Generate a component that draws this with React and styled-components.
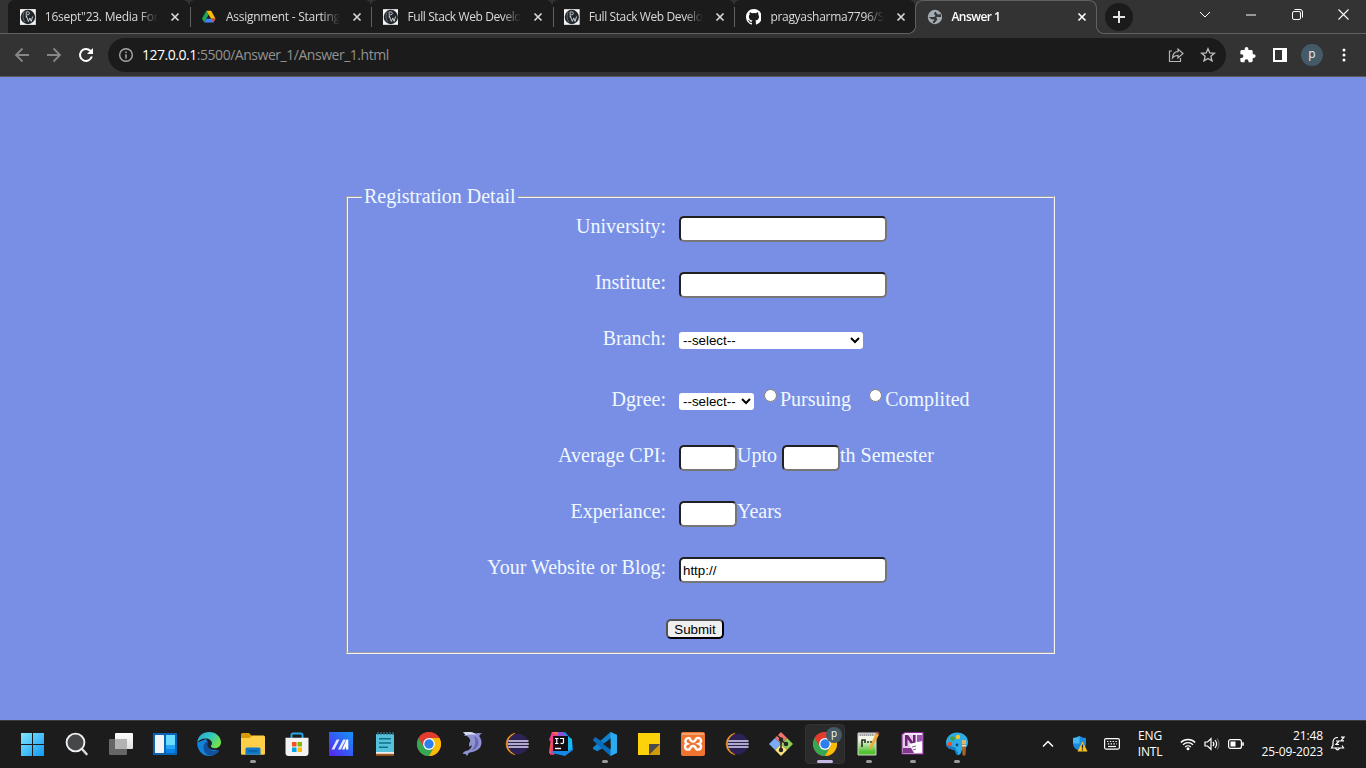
import React from "react";
import styled, { createGlobalStyle, css } from "styled-components";

const GlobalStyle = createGlobalStyle`
  * { box-sizing: border-box; }
  body { margin: 0; overflow: hidden; background: #788fe5; }
`;

const Screen = styled.div`
  width: 1366px;
  height: 768px;
  display: flex;
  flex-direction: column;
  font-family: "Open Sans", "Noto Sans", sans-serif;
  overflow: hidden;
`;

/* ---------- browser chrome ---------- */

const TabStrip = styled.div`
  height: 34px;
  flex: none;
  display: flex;
  padding-left: 8px;
  background: #333333;
  border-bottom: 1px solid #606060;
`;

const TabBox = styled.div`
  position: relative;
  flex: none;
  width: 181.4px;
  height: 33px;
  display: flex;
  align-items: center;
  padding: 0 8px 0 12px;
  border-radius: 6px 6px 0 0;
  background: #1b1b1b;
  color: #dadada;

  ${(p) =>
    p.$divided &&
    css`
      &::after {
        content: "";
        position: absolute;
        right: -1.6px;
        top: 7px;
        width: 1px;
        height: 20px;
        background: #606060;
        z-index: 1;
      }
    `}

  ${(p) =>
    p.$active &&
    css`
      height: 34px;
      margin-left: -0.4px;
      width: 182px;
      padding-left: 11px;
      padding-bottom: 1px;
      background: #333333;
      color: #ffffff;
      border: solid #606060;
      border-width: 1px 1px 0;
      border-radius: 8px 8px 0 0;
      z-index: 2;
      &::before,
      &::after {
        content: "";
        position: absolute;
        bottom: 0;
        width: 8px;
        height: 8px;
      }
      &::before {
        left: -8px;
        background: radial-gradient(circle at 0 0, #1b1b1b 6.7px, #606060 7.2px, #606060 7.7px, #333333 8.2px);
      }
      &::after {
        right: -8px;
        background: radial-gradient(circle at 100% 0, #333333 6.7px, #606060 7.2px, #606060 7.7px, #333333 8.2px);
      }
    `}
`;

const TabTitle = styled.div`
  width: 114px;
  margin-left: 9px;
  font-size: 12px;
  line-height: 16px;
  font-weight: ${(p) => (p.$active ? 600 : 500)};
  letter-spacing: ${(p) => p.$spacing};
  white-space: nowrap;
  mask-image: linear-gradient(90deg, #000 84%, transparent 100%);
`;

const CloseMark = styled.svg`
  flex: none;
  margin-left: 11px;
`;

const NewTab = styled.div`
  width: 28px;
  height: 28px;
  margin: 3px 0 0 8px;
  border-radius: 50%;
  background: #1b1b1b;
  display: flex;
  align-items: center;
  justify-content: center;
`;

const WindowControls = styled.div`
  margin-left: auto;
  height: 29px;
  display: flex;
`;

const WindowControl = styled.div`
  width: 46px;
  display: flex;
  align-items: center;
  justify-content: center;
`;

const Toolbar = styled.div`
  height: 43px;
  flex: none;
  display: flex;
  align-items: center;
  padding: 0 6px;
  background: #333333;
  border-bottom: 1px solid #5a5a5a;
`;

const ToolCell = styled.div`
  width: 32px;
  height: 32px;
  display: flex;
  align-items: center;
  justify-content: center;
`;

const AddressBar = styled.div`
  flex: 1;
  height: 34px;
  margin: 0 6px;
  border-radius: 17px;
  background: #1b1b1b;
  display: flex;
  align-items: center;
  padding: 0 2px 0 11px;
`;

const Url = styled.div`
  flex: 1;
  margin-left: 9px;
  font-size: 14px;
  line-height: 18px;
  letter-spacing: -0.47px;
  color: #929292;
  b { font-weight: 400; color: #ffffff; }
`;

const Avatar = styled.div`
  width: 22px;
  height: 22px;
  border-radius: 50%;
  background: #455a67;
  color: #e8eef2;
  font-size: 12px;
  line-height: 19px;
  text-align: center;
`;

/* ---------- page ---------- */

const Page = styled.main`
  height: 643px;
  flex: none;
  padding: 109px 0 0 346px;
  background: #788fe5;
  color: aliceblue;
  font: 20px/20px "Liberation Serif", "Times New Roman", serif;
`;

const Fieldset = styled.fieldset`
  width: 709px;
  height: 468px;
  margin: 0;
  padding: 8px 0 0;
  border: 2px groove #f4f4f4;
`;

const Legend = styled.legend`
  margin-left: 14px;
  padding: 0 2px 2px;
`;

const Row = styled.div`
  height: ${(p) => p.$height || 56}px;
  display: grid;
  grid-template-columns: 318px 1fr;
  column-gap: 13px;
`;

const Label = styled.label`
  text-align: right;
`;

const Controls = styled.div`
  display: flex;
  align-items: flex-start;
  white-space: pre;
`;

const TextInput = styled.input`
  width: ${(p) => p.$width || 208}px;
  height: 26px;
  padding: 1px 2px;
  border: 2px inset #767676;
  border-radius: 5px;
  background: #ffffff;
  color: #000000;
  font: 13.33px "Liberation Sans", Arial, sans-serif;
`;

const Select = styled.select`
  width: ${(p) => p.$width}px;
  height: 17px;
  margin-top: 4px;
  padding: 0;
  border: 0;
  border-radius: 3px;
  background-color: #ffffff;
  color: #000000;
  font: 13.33px "Liberation Sans", Arial, sans-serif;
`;

const Radio = styled.input`
  width: 13px;
  height: 13px;
  margin: 0 3px 0 ${(p) => p.$before}px;
`;

const Text = styled.span`
  margin-left: ${(p) => p.$before || 0}px;
`;

const Submit = styled.button`
  display: block;
  width: 58px;
  height: 20px;
  margin: 6px 0 0 318px;
  padding: 0;
  border: 2px outset #000000;
  border-radius: 5px;
  background: #efefef;
  color: #000000;
  font: 13.33px/15px "Liberation Sans", Arial, sans-serif;
`;

/* ---------- taskbar ---------- */

const Taskbar = styled.footer`
  height: 48px;
  flex: none;
  display: flex;
  padding: 0 16px 0 11px;
  background: #1c1c1c;
  border-top: 1px solid #3b3b42;
  color: #ffffff;
`;

const AppSlot = styled.div`
  position: relative;
  width: 44px;
  height: 46px;
  display: flex;
  align-items: center;
  justify-content: center;

  ${(p) =>
    p.$active &&
    css`
      &::before {
        content: "";
        position: absolute;
        inset: 3px 2px;
        border-radius: 4px;
        background: #2b2b2b;
        border: 1px solid #333333;
      }
    `}

  ${(p) =>
    p.$running &&
    css`
      &::after {
        content: "";
        position: absolute;
        bottom: 4px;
        left: 50%;
        width: ${p.$active ? 16 : 6}px;
        height: 3px;
        transform: translateX(-50%);
        border-radius: 2px;
        background: ${p.$active ? "#c3b9e4" : "#9a9a9a"};
      }
    `}

  svg { position: relative; overflow: visible; }
`;

const ProfileBadge = styled.span`
  position: absolute;
  right: 5px;
  top: 6px;
  width: 16px;
  height: 16px;
  border-radius: 50%;
  background: #455a67;
  color: #ffffff;
  font-size: 10px;
  line-height: 13px;
  text-align: center;
`;

const Tray = styled.div`
  margin-left: auto;
  height: 46px;
  display: flex;
  align-items: center;
`;

const TrayCell = styled.div`
  width: ${(p) => p.$width || 24}px;
  display: flex;
  align-items: center;
  justify-content: center;
`;

const TrayText = styled.div`
  width: ${(p) => p.$width}px;
  margin-right: ${(p) => p.$after}px;
  font-size: 12px;
  line-height: 16px;
  font-weight: 500;
  text-align: ${(p) => p.$align};
  letter-spacing: ${(p) => p.$spacing};
  white-space: nowrap;
`;

/* ---------- icons ---------- */

const PwIcon = () => (
  <svg width="16" height="16" viewBox="0 0 16 16">
    <rect width="16" height="16" fill="#f5f5f5" />
    <circle cx="8" cy="8" r="7.3" fill="#20262b" />
    <path d="M6.300 8.500V2.800h1.800a1.400 1.400 0 0 1 0 2.900H6.500" fill="none" stroke="#c9cfd1" strokeWidth=".9" />
    <path d="m6.500 7 2 5.500 1.500-3.500 1.300 3.500 1.500-5" fill="none" stroke="#dfe3e4" strokeWidth=".9" />
    <path d="M4.500 2.800C2.500 5 2.500 10 5 13" fill="none" stroke="#7b858a" strokeWidth=".8" />
  </svg>
);

const DriveIcon = () => (
  <svg width="16" height="16" viewBox="0 0 16 16">
    <path d="M5.500 1.500 1 9.700l2.300 3.800L8 5.700z" fill="#1ea55b" />
    <path d="M5.500 1.500h5L15 9.700h-4.600z" fill="#fbbc05" />
    <path d="M5.600 9.700H15l-2.300 3.900H3.300z" fill="#4285f4" />
    <path d="M10.400 9.700H15l-2.300 3.900z" fill="#ea4335" />
  </svg>
);

const GithubIcon = () => (
  <svg width="16" height="16" viewBox="0 0 16 16">
    <path fill="#fff" d="M8 0C3.580 0 0 3.580 0 8c0 3.540 2.290 6.530 5.470 7.590.4.070.55-.17.55-.38 0-.19-.01-.82-.01-1.490-2.010.37-2.530-.49-2.690-.94-.09-.23-.48-.94-.82-1.130-.28-.15-.68-.52-.01-.53.630-.010 1.080.58 1.230.82.720 1.210 1.870.87 2.330.66.070-.52.280-.87.510-1.070-1.780-.2-3.640-.89-3.640-3.950 0-.87.310-1.590.82-2.150-.08-.2-.36-1.020.08-2.120 0 0 .67-.21 2.200.82a7.600 7.600 0 0 1 4 0c1.530-1.040 2.200-.82 2.200-.82.440 1.100.160 1.920.080 2.120.510.560.820 1.270.820 2.150 0 3.070-1.870 3.750-3.650 3.950.290.250.540.730.540 1.480 0 1.070-.01 1.930-.01 2.200 0 .210.150.460.550.380A8.010 8.010 0 0 0 16 8c0-4.420-3.580-8-8-8z" />
  </svg>
);

const GlobeIcon = () => (
  <svg width="16" height="16" viewBox="0 0 16 16">
    <circle cx="8" cy="8" r="7.200" fill="#a3abb3" />
    <path d="M8.200 2.500 7 5 8.500 6.200 7.500 8H4.500l-2.800.3L5 10.500l2-.3.5 1.500H6v2l1.200.6 2.300-2.500 1-1.800L9 8.800l1.800-1 2.200.4 1.400-.7-.8-2.700-1.800 1-1.300-.6z" fill="#353638" />
  </svg>
);

const Cross = ({ color }) => (
  <CloseMark width="12" height="12" viewBox="0 0 12 12">
    <path d="m2.500 2.500 7 7m0-7-7 7" stroke={color} strokeWidth="1.700" />
  </CloseMark>
);

const Chrome = () => (
  <svg width="24" height="24" viewBox="0 0 24 24">
    <circle cx="12" cy="12" r="12" fill="#ea4335" />
    <path d="M1.600 6A12 12 0 0 0 12 24l5.200-9L12 12H6.800z" fill="#34a853" />
    <path d="M22.400 6H12l5.200 9L12 24A12 12 0 0 0 22.400 6z" fill="#fbbc05" />
    <path d="M1.600 6a12 12 0 0 1 20.800 0H12a6 6 0 0 0-5.200 9z" fill="#e33b2e" />
    <circle cx="12" cy="12" r="5.900" fill="#fff" />
    <circle cx="12" cy="12" r="4.700" fill="#2d7ff0" />
  </svg>
);

const Eclipse = () => (
  <svg width="24" height="24" viewBox="0 0 24 24">
    <path d="M10 1.200a11 11 0 0 0 0 21.600A12.500 12.500 0 0 1 10 1.200z" fill="#f7941e" stroke="#f7941e" strokeWidth=".6" />
    <circle cx="13" cy="12" r="10.400" fill="#2c2255" />
    <path d="M3.300 9h20.200M2.800 12h21M3.300 15h20.200" stroke="#d9d8ed" strokeWidth="1.600" />
  </svg>
);

const appIcons = {
  start: (
    <svg width="24" height="24" viewBox="0 0 24 24">
      <defs>
        <linearGradient id="win" x1="0" y1="0" x2="1" y2="1">
          <stop offset="0" stopColor="#7fe9ff" />
          <stop offset="1" stopColor="#1299f5" />
        </linearGradient>
      </defs>
      <path fill="url(#win)" d="M0 1h11v11H0zM12 1h11v11H12zM0 13h11v11H0zM12 13h11v11H12z" />
    </svg>
  ),
  search: (
    <svg width="24" height="24" viewBox="0 0 24 24">
      <path d="m17 17 4.500 5" stroke="#d3d8dc" strokeWidth="2.600" strokeLinecap="round" />
      <circle cx="10.500" cy="10.500" r="8.900" fill="#454749" stroke="#eef0f1" strokeWidth="1.900" />
    </svg>
  ),
  taskView: (
    <svg width="24" height="24" viewBox="0 0 24 24">
      <defs>
        <linearGradient id="tv" x1="0" y1="0" x2="0" y2="1">
          <stop offset="0" stopColor="#fff" />
          <stop offset="1" stopColor="#dedede" />
        </linearGradient>
      </defs>
      <rect x="0" y="7" width="18" height="16" rx="1" fill="#666" />
      <rect x="6" y="1" width="18" height="16" rx="1" fill="url(#tv)" />
      <path d="M6 7h12v10H6z" fill="#b3b3b3" />
    </svg>
  ),
  widgets: (
    <svg width="24" height="24" viewBox="0 0 24 24">
      <rect y="1" width="24" height="22" rx="1" fill="#0b63b8" />
      <rect x="2" y="3" width="9" height="18" rx=".8" fill="#f1f3f5" />
      <path d="M13 3h9v10h-9z" fill="#69dcff" />
      <path d="M13 13h9v4h-9z" fill="#25a5f5" />
      <path d="M13 17h9v4h-9z" fill="#0a84e8" />
    </svg>
  ),
  edge: (
    <svg width="24" height="24" viewBox="0 0 24 24">
      <defs>
        <linearGradient id="edgeTop" x1="0" y1="0" x2="1" y2=".5">
          <stop offset="0" stopColor="#27a8e0" />
          <stop offset=".55" stopColor="#34c6c2" />
          <stop offset="1" stopColor="#6fe34c" />
        </linearGradient>
      </defs>
      <path d="M.2 10.500C0 18 5 24 12 24c4 0 7.500-1.800 9.700-4.800L14 16 9 7z" fill="#1284d8" />
      <path d="M.2 10.500C1 4 6 0 12 0c7 0 12 5 12 10.200 0 3.800-2.800 6-6 6-2.600 0-4.300-.9-4.300-1.900 0-.8 1.100-1.200 1.100-3C14.800 8.500 12 6.500 8.500 6.500 4.500 6.500 1.500 8.500.2 10.500z" fill="url(#edgeTop)" />
      <path d="M10.800 9.300C8 10 6.500 12.500 6.500 15.500 6.500 20 10 23.500 14 23.800c3.400-.5 6-2.200 7.800-4.800.6-.8 0-1.100-.7-.7-3 1.500-7 .8-9-1.600-1.900-2.200-2.500-5.200-1.300-7.400z" fill="#124f9d" />
      <path d="M13.700 14.300c0-.8 1.100-1.200 1.100-3 0-1-.8-2-2-2.200-1.500.4-2.600 1.600-2.600 3.300 0 1.500.8 3.300 2.200 4.300 2.500 1.700 6.200 1.700 8.800-.2-3.300.8-7.500-.5-7.500-2.200z" fill="#1c2630" />
    </svg>
  ),
  explorer: (
    <svg width="24" height="24" viewBox="0 0 24 24">
      <path d="M0 2.500A1.500 1.500 0 0 1 1.500 1H8l2.500 2.500H22.500A1.500 1.500 0 0 1 24 5v5H0z" fill="#d99a0a" />
      <path d="M0 6h8.500L11 3.800h11.500A1.500 1.500 0 0 1 24 5.300v16.200a1.200 1.200 0 0 1-1.200 1.200H1.200A1.200 1.200 0 0 1 0 21.500z" fill="#ffcf47" />
      <path d="M4.500 22.700V17a1.500 1.500 0 0 1 1.500-1.500h12a1.500 1.500 0 0 1 1.500 1.500v5.700z" fill="#0f78c8" />
      <path d="M7.500 19h9" stroke="#0b569c" strokeWidth="1.200" />
    </svg>
  ),
  store: (
    <svg width="24" height="24" viewBox="0 0 24 24">
      <path d="M6.500 6.500V3.200C6.500 2 7 1.500 8 1.500h8c1 0 1.500.5 1.500 1.700v3.300" fill="none" stroke="#27a9e8" strokeWidth="1.900" />
      <path d="M.5 5.800h23V21a3 3 0 0 1-3 3h-17a3 3 0 0 1-3-3z" fill="#f2f2f2" />
      <path d="M7 10h4.500v4.500H7z" fill="#f25022" />
      <path d="M12.500 10H17v4.500h-4.500z" fill="#7fba00" />
      <path d="M7 15.500h4.500V20H7z" fill="#00a4ef" />
      <path d="M12.500 15.500H17V20h-4.500z" fill="#ffb900" />
    </svg>
  ),
  myAsus: (
    <svg width="24" height="24" viewBox="0 0 24 24">
      <defs>
        <linearGradient id="asus" x1="0" y1="1" x2="1" y2="0">
          <stop offset="0" stopColor="#5524ed" />
          <stop offset="1" stopColor="#1395fb" />
        </linearGradient>
      </defs>
      <path d="M0 0h24v24H0z" fill="url(#asus)" />
      <path d="m2.500 17.500 5.200-10h2.800l-5.200 10zm6.500 0 5.200-10H17l-5.200 10z" fill="#e8e6ff" />
      <path d="m13 17.500 4.500-10h1.800v10h-2.400v-3l-1.500 3z" fill="#fff" />
    </svg>
  ),
  notepad: (
    <svg width="24" height="24" viewBox="0 0 24 24">
      <path d="M3 20h18v3.800H3z" fill="#a65a1c" />
      <path d="M3 20h18v1.800H3z" fill="#eee" />
      <path d="M3 2h18v18H3z" fill="#55c1db" />
      <path d="M5 0v3M8 0v3M11 0v3M14 0v3M17 0v3M20 0v3" stroke="#2b7990" strokeWidth="1.300" />
      <path d="M6 6.800h12M6 11h12M6 15.300h9" stroke="#136d8a" strokeWidth="1.500" />
    </svg>
  ),
  chrome: <Chrome />,
  dolphin: (
    <svg width="24" height="24" viewBox="0 0 24 24">
      <path d="M2 .5C6 0 10-.3 14 1.500c2.500-.8 5-.6 7.500 0-2 .6-3 1.500-3.200 2.700 3.500 4.800 2.700 10.300-1.300 13.300-3 2.200-6.500 2.500-9 3.200L6 24l-1.500-2-3-.3c1.500-2.300 3.500-3.200 5.500-3.200 2.500-1.500 3.800-3.500 4-5.500L8.500 15c-.8-2.500-.4-4.500.8-6C9 5.500 6 3.500 3 3.500L4.500 2.500z" fill="#9092d4" />
      <path d="M13 4c4.500 2 6 7 3 11-1.500 2-4 3.500-6.500 3.800 5-3.300 6-9.500 3.500-14.800z" fill="#6568b3" />
      <path d="M2 .5C7 0 10-.3 14 1.500l1 1.500c-4-1-8 0-12 .5L4.500 2.500z" fill="#d9daf0" />
    </svg>
  ),
  eclipse: <Eclipse />,
  intellij: (
    <svg width="24" height="24" viewBox="0 0 24 24">
      <path d="M3 0h9L5 23 0 21z" fill="#fb6b45" />
      <path d="M3 0 9 4 4 12 0 8zM2 13l3-3v12l-4 1z" fill="#f23b86" />
      <path d="m11 1 5-1 7 8 1 10-8 6L3 21z" fill="#1688e8" />
      <path d="M9 0h5l3 5H8z" fill="#8d4fd6" />
      <path d="m18 4 5 3v10l-4 2z" fill="#15b8f2" />
      <path d="M4 4h15v15H4z" fill="#110c10" />
      <path d="M6 16.500h6" stroke="#fff" strokeWidth="1.400" />
      <path d="M6 6.500h3.500M7.750 6.500v5M6 11.500h3.500M11 6.500h3.500v3.800c0 1-1 1.400-1.800 1.200l-1.200-.5" fill="none" stroke="#fff" strokeWidth="1.200" />
    </svg>
  ),
  vscode: (
    <svg width="24" height="24" viewBox="0 0 24 24">
      <path d="M17.500 0 24 3v5L4.200 19.200 0 17V15.500z" fill="#0f83cf" />
      <path d="M0 7.500 2.300 5 24 19.500 17.500 24 0 8.500z" fill="#096bb5" />
      <path d="M17.500 0 24 3v18l-6.500 3z" fill="#2baaf0" />
      <path d="m17.500 6.500-7.300 5.500 7.300 5.500z" fill="#1c1c1c" />
    </svg>
  ),
  stickyNotes: (
    <svg width="24" height="24" viewBox="0 0 24 24">
      <path d="M1 1h22v22H1z" fill="#fdd20a" />
      <path d="M12 23V12h11v11z" fill="#d29b09" />
      <path d="M12 12h11L12 23z" fill="#4c4b49" />
    </svg>
  ),
  xampp: (
    <svg width="24" height="24" viewBox="0 0 24 24">
      <rect width="24" height="24" rx="2" fill="#ee7430" />
      <path d="M1 1h22v2H1z" fill="#f7b58b" opacity=".7" />
      <path d="M8 6.200a3 3 0 0 0-2 5.600 3 3 0 1 0 2.800 5.200c1.300-2.200.9-3 3.200-3s1.900.8 3.200 3a3 3 0 1 0 2.800-5.200 3 3 0 1 0-2.800-5.200C13.900 8.800 14.300 9.600 12 9.600s-1.900-.8-3.200-3A3 3 0 0 0 8 6.200z" fill="none" stroke="#fff" strokeWidth="2.400" />
    </svg>
  ),
  git: (
    <svg width="24" height="24" viewBox="0 0 24 24">
      <path d="m12 0 6 6-6 6-6-6z" fill="#f3736f" />
      <path d="m6 6 6 6-6 6-6-6z" fill="#7baaf7" />
      <path d="m18 6 6 6-6 6-6-6z" fill="#8dce58" />
      <path d="m12 12 6 6-6 6-6-6z" fill="#fbe27c" />
      <path d="m8 3 4 4v11m0-10 5 4" fill="none" stroke="#252525" strokeWidth="1.500" />
      <circle cx="12" cy="7.500" r="2.200" fill="#252525" />
      <circle cx="12" cy="18" r="2.200" fill="#252525" />
      <circle cx="17" cy="12" r="2.200" fill="#252525" />
    </svg>
  ),
  notepadPlus: (
    <svg width="24" height="24" viewBox="0 0 24 24">
      <defs>
        <linearGradient id="npp" x1="0" y1="0" x2="0" y2="1">
          <stop offset=".3" stopColor="#f5f9e9" />
          <stop offset=".85" stopColor="#53c330" />
        </linearGradient>
      </defs>
      <path d="M1 1h18v22H1z" fill="url(#npp)" stroke="#d3d3d3" />
      <path d="M1 1h18v3H1z" fill="#cacaca" />
      <path d="M3 3h14" stroke="#777" strokeDasharray="1 1" />
      <path d="M5 15V8h3v3M10 10h2m1 0h2" fill="none" stroke="#293024" strokeWidth="1.600" />
      <path d="m12 18 1-4 6-13 3 1.700-7 13z" fill="#f0ab35" />
      <path d="m19 1 .7-1.500 2.800 1.500-.7 1.500z" fill="#b55852" />
    </svg>
  ),
  oneNote: (
    <svg width="24" height="24" viewBox="0 0 24 24">
      <path d="M1 2.500 4 .5h18v21.500H1z" fill="#f2e8f5" stroke="#8d2b9b" strokeWidth="1.200" />
      <path d="M2 3h13v13H2z" fill="#74287e" opacity=".15" />
      <path d="M4 14V3h3l5 7V3h2.500v11h-3L6.500 7v7z" fill="#702078" />
      <path d="M16 3h5.500v7H16z" fill="#9b55ab" />
      <path d="M2 16h12v5H2z" fill="#80388b" />
      <path d="m8 12 13-3v11l-8 1z" fill="#fff" />
      <path d="m11 15 4-1m-3 4 3-1" stroke="#9b55ab" />
    </svg>
  ),
  paint: (
    <svg width="24" height="24" viewBox="0 0 24 24">
      <path d="M12 .5C19 .5 23 5 23 10c0 7-5 6-6 8s-1 5-4 5-1.500-4-4-5-8-1-8-7C1 5 6 .5 12 .5z" fill="#2caee9" />
      <path d="M1 11c0 6 5.500 6 8 7s1 5 4 5v-3c-2 0-1-4-4-5S2 14 1 11z" fill="#137dc5" />
      <circle cx="5" cy="12" r="2.300" fill="#e9512b" />
      <circle cx="7.500" cy="6.500" r="2.300" fill="#46a23b" />
      <circle cx="13" cy="5" r="2.200" fill="#fbc628" />
      <circle cx="12" cy="13" r="1.400" fill="#174874" />
      <path d="M17 8h4v5h-4z" fill="#e0b66c" />
      <path d="M17 12.500h4V15l-.5 8q-1.500 1.500-3 0L17 15z" fill="#a5642f" />
      <path d="M17 13h4v1.500h-4z" fill="#ddd" />
    </svg>
  ),
};

const strip = { fill: "none", stroke: "#fff", strokeWidth: 1.2 };

/* ---------- data ---------- */

const tabs = [
  { title: '16sept"23. Media For', icon: <PwIcon />, spacing: "-0.25px" },
  { title: "Assignment - Starting", icon: <DriveIcon />, spacing: "-0.25px" },
  { title: "Full Stack Web Develo", icon: <PwIcon />, spacing: "-0.4px" },
  { title: "Full Stack Web Develo", icon: <PwIcon />, spacing: "-0.4px" },
  { title: "pragyasharma7796/S", icon: <GithubIcon />, spacing: "-0.3px" },
  { title: "Answer 1", icon: <GlobeIcon />, active: true, spacing: "-0.55px" },
];

const apps = [
  { icon: "start" },
  { icon: "search" },
  { icon: "taskView" },
  { icon: "widgets" },
  { icon: "edge" },
  { icon: "explorer", running: true },
  { icon: "store" },
  { icon: "myAsus" },
  { icon: "notepad" },
  { icon: "chrome" },
  { icon: "dolphin" },
  { icon: "eclipse" },
  { icon: "intellij" },
  { icon: "vscode", running: true },
  { icon: "stickyNotes" },
  { icon: "xampp" },
  { icon: "eclipse" },
  { icon: "git" },
  { icon: "chrome", running: true, active: true, badge: "p" },
  { icon: "notepadPlus", running: true },
  { icon: "oneNote", running: true },
  { icon: "paint", running: true },
];

/* ---------- sections ---------- */

const BrowserTabs = () => (
  <TabStrip>
    {tabs.map((t, i) => (
      <TabBox key={i} $active={t.active} $divided={i < 4}>
        {t.icon}
        <TabTitle $active={t.active} $spacing={t.spacing}>{t.title}</TabTitle>
        <Cross color={t.active ? "#fff" : "#d6d6d6"} />
      </TabBox>
    ))}
    <NewTab>
      <svg width="12" height="12" viewBox="0 0 12 12">
        <path d="M6 0v12M0 6h12" stroke="#e4e4e4" strokeWidth="2" />
      </svg>
    </NewTab>
    <WindowControls>
      <WindowControl>
        <svg width="12" height="12" viewBox="0 0 12 12"><path d="m1 3 5 5 5-5" {...strip} strokeWidth="1" /></svg>
      </WindowControl>
      <WindowControl>
        <svg width="10" height="10" viewBox="0 0 10 10"><path d="M0 5h10" {...strip} strokeWidth="1" /></svg>
      </WindowControl>
      <WindowControl>
        <svg width="11" height="11" viewBox="0 0 11 11">
          <rect x=".5" y="2.500" width="8" height="8" rx="1.500" {...strip} strokeWidth="1" />
          <path d="M2.500.5H8a2.500 2.500 0 0 1 2.500 2.500v5.500" {...strip} strokeWidth="1" />
        </svg>
      </WindowControl>
      <WindowControl>
        <svg width="11" height="11" viewBox="0 0 11 11"><path d="m.5.5 10 10m0-10-10 10" {...strip} strokeWidth="1.100" /></svg>
      </WindowControl>
    </WindowControls>
  </TabStrip>
);

const BrowserToolbar = () => (
  <Toolbar>
    <ToolCell>
      <svg width="16" height="16" viewBox="0 0 16 16"><path d="M15 8H2m6.500-6.500L2 8l6.500 6.500" fill="none" stroke="#868686" strokeWidth="1.800" /></svg>
    </ToolCell>
    <ToolCell>
      <svg width="16" height="16" viewBox="0 0 16 16"><path d="M1 8h13M7.500 1.500 14 8l-6.500 6.500" fill="none" stroke="#868686" strokeWidth="1.800" /></svg>
    </ToolCell>
    <ToolCell>
      <svg width="16" height="16" viewBox="0 0 16 16">
        <path d="M13.800 9.600A6 6 0 1 1 12.300 3.800l1 1" fill="none" stroke="#fff" strokeWidth="2" />
        <path d="M15 1v6H9z" fill="#fff" />
      </svg>
    </ToolCell>
    <AddressBar>
      <svg width="14" height="14" viewBox="0 0 14 14">
        <circle cx="7" cy="7" r="6.300" fill="none" stroke="#a5aaae" strokeWidth="1.400" />
        <path d="M7 6.200v4.300M7 3.500v1.500" stroke="#a5aaae" strokeWidth="1.500" />
      </svg>
      <Url><b>127.0.0.1</b>:5500/Answer_1/Answer_1.html</Url>
      <ToolCell>
        <svg width="16" height="16" viewBox="0 0 16 16">
          <path d="M4 4H1.500v10.500h11V11" fill="none" stroke="#b6b6b6" strokeWidth="1.200" />
          <path d="M4.500 11c.3-4 2.300-6.300 5.500-6.300V2l5 4.500-5 4.500V8.300C7.500 8.300 6 9 4.500 11z" fill="none" stroke="#b6b6b6" strokeWidth="1.200" />
        </svg>
      </ToolCell>
      <ToolCell>
        <svg width="16" height="16" viewBox="0 0 16 16">
          <path d="m8 1.700 1.800 4.200 4.600.4-3.500 3 1.100 4.500L8 11.400l-4 2.400 1.100-4.500-3.500-3 4.600-.4z" fill="none" stroke="#c2c2c2" strokeWidth="1.300" />
        </svg>
      </ToolCell>
    </AddressBar>
    <ToolCell>
      <svg width="16" height="16" viewBox="1.500 1 22 22">
        <path fill="#fff" d="M20.500 11H19V7c0-1.100-.9-2-2-2h-4V3.500a2.500 2.500 0 0 0-5 0V5H4c-1.100 0-2 .9-2 2v3.800h1.500a2.700 2.700 0 0 1 0 5.400H2V20c0 1.100.9 2 2 2h3.800v-1.500a2.700 2.700 0 0 1 5.400 0V22H17c1.100 0 2-.9 2-2v-4h1.500a2.500 2.500 0 0 0 0-5z" />
      </svg>
    </ToolCell>
    <ToolCell>
      <svg width="14" height="14" viewBox="0 0 14 14"><path fill="#fff" fillRule="evenodd" d="M0 0h14v14H0zM2 2v10h7V2z" /></svg>
    </ToolCell>
    <ToolCell><Avatar>p</Avatar></ToolCell>
    <ToolCell>
      <svg width="4" height="14" viewBox="0 0 4 14">
        <circle cx="2" cy="2" r="1.500" fill="#fff" /><circle cx="2" cy="7" r="1.500" fill="#fff" /><circle cx="2" cy="12" r="1.500" fill="#fff" />
      </svg>
    </ToolCell>
  </Toolbar>
);

const RegistrationForm = () => (
  <Page>
    <Fieldset>
      <Legend>Registration Detail</Legend>
      <Row><Label>University:</Label><Controls><TextInput /></Controls></Row>
      <Row><Label>Institute:</Label><Controls><TextInput /></Controls></Row>
      <Row $height={61}>
        <Label>Branch:</Label>
        <Controls><Select $width={184}><option>--select--</option></Select></Controls>
      </Row>
      <Row>
        <Label>Dgree:</Label>
        <Controls>
          <Select $width={75}><option>--select--</option></Select>
          <Radio type="radio" name="status" $before={10} /><Text>Pursuing</Text>
          <Radio type="radio" name="status" $before={18} /><Text>Complited</Text>
        </Controls>
      </Row>
      <Row>
        <Label>Average CPI:</Label>
        <Controls>
          <TextInput $width={58} /><Text>{"Upto "}</Text>
          <TextInput $width={58} /><Text>th Semester</Text>
        </Controls>
      </Row>
      <Row><Label>Experiance:</Label><Controls><TextInput $width={58} /><Text>Years</Text></Controls></Row>
      <Row><Label>Your Website or Blog:</Label><Controls><TextInput defaultValue="http://" /></Controls></Row>
      <Submit type="button">Submit</Submit>
    </Fieldset>
  </Page>
);

const SystemTray = () => (
  <Tray>
    <TrayCell $width={32}>
      <svg width="12" height="12" viewBox="0 0 12 12"><path d="m1 8.500 5-5 5 5" {...strip} strokeWidth="1.500" /></svg>
    </TrayCell>
    <TrayCell $width={32}>
      <svg width="16" height="16" viewBox="0 0 16 16">
        <path d="M7.500 0Q10.500 2 14 2v5.500q0 5-6.500 7.500Q1 12.500 1 7.500V2q3.500 0 6.500-2z" fill="#1a8be0" />
        <path d="M7.500 0v7.500H1V2q3.500 0 6.500-2z" fill="#45b7f4" />
        <path d="M10.500 5.500 15.500 15.500h-10z" fill="#fdc21c" />
        <path d="M10.500 8.500v4M10.500 13.200v1.200" stroke="#222" strokeWidth="1.300" />
      </svg>
    </TrayCell>
    <TrayCell $width={32}>
      <svg width="16" height="12" viewBox="0 0 16 12">
        <rect x=".6" y=".6" width="14.800" height="10.500" rx="1.500" {...strip} />
        <path d="M3 3.500h10M3.800 5.900h9" {...strip} strokeDasharray="1.400 1.400" />
        <path d="M4 8.500h8" {...strip} />
      </svg>
    </TrayCell>
    <TrayText $width={44} $after={4} $align="center" $spacing="-0.2px">ENG<br />INTL</TrayText>
    <TrayCell>
      <svg width="16" height="14" viewBox="0 0 16 14">
        <path d="M.8 5.500a10.200 10.200 0 0 1 14.400 0M3 7.800a7 7 0 0 1 10 0M5.200 10a4 4 0 0 1 5.600 0" {...strip} strokeWidth="1.300" />
        <circle cx="8" cy="11.800" r="1.500" fill="#fff" />
      </svg>
    </TrayCell>
    <TrayCell>
      <svg width="16" height="14" viewBox="0 0 16 14">
        <path d="M1 5h2.500L7 1.700v10.600L3.500 9H1z" {...strip} />
        <path d="M9 4.800q1.700 2.200 0 4.400M11 3q3.200 4 0 8" {...strip} />
        <path d="M13 1.500q4 5.500 0 11" {...strip} stroke="#666" />
      </svg>
    </TrayCell>
    <TrayCell>
      <svg width="16" height="10" viewBox="0 0 16 10">
        <rect x=".6" y=".6" width="12.800" height="8.800" rx="2" {...strip} />
        <rect x="2.500" y="2.500" width="5" height="5" fill="#fff" />
        <path d="M15 3.200v3.600" {...strip} strokeWidth="1.600" />
      </svg>
    </TrayCell>
    <TrayText $width={75} $after={3} $align="right" $spacing="-0.1px">21:48<br />25-09-2023</TrayText>
    <TrayCell>
      <svg width="16" height="16" viewBox="0 0 16 16">
        <path d="M8 1.500C4.500 1.500 3 4 3 6.500V9l-1.500 3h12L12 9.500M5.500 12.200q2 3.200 4 0" {...strip} />
        <path d="M6 5h3L6 8.500h3M11 1.200h3L11 4.800h3" {...strip} />
      </svg>
    </TrayCell>
  </Tray>
);

export default function App() {
  return (
    <Screen>
      <GlobalStyle />
      <BrowserTabs />
      <BrowserToolbar />
      <RegistrationForm />
      <Taskbar>
        {apps.map((a, i) => (
          <AppSlot key={i} $running={a.running} $active={a.active}>
            {appIcons[a.icon]}
            {a.badge && <ProfileBadge>{a.badge}</ProfileBadge>}
          </AppSlot>
        ))}
        <SystemTray />
      </Taskbar>
    </Screen>
  );
}
